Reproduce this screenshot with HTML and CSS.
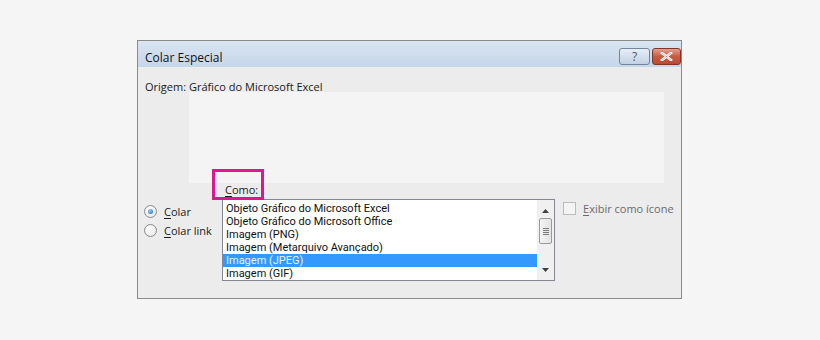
FILE: index.html
```html
<!DOCTYPE html>
<html lang="pt">
<head>
<meta charset="utf-8">
<title>Colar Especial</title>
<link rel="stylesheet" href="styles.css">
</head>
<body>
<div class="dialog">
  <div class="titlebar">
    <span class="title">Colar Especial</span>
    <div class="tbtns">
      <div class="tbtn help">?</div>
      <div class="tbtn close">
        <svg width="13" height="9" viewBox="0 0 13 9"><path d="M2 1 L11 8 M11 1 L2 8" stroke="#fff" stroke-width="2.6" stroke-linecap="square"/><path d="M2 1 L11 8 M11 1 L2 8" stroke="#5a1d12" stroke-width="0.6" fill="none" opacity="0.5"/></svg>
      </div>
    </div>
  </div>
  <div class="content">
    <div class="origin"><span class="olabel">Origem:</span><span>Gráfico do Microsoft Excel</span></div>
    <div class="preview"></div>
    <div class="como"><span class="u">C</span>omo:</div>
    <div class="mainrow">
      <div class="radios">
        <label class="radio"><span class="rb on"></span><span><span class="u">C</span>olar</span></label>
        <label class="radio"><span class="rb"></span><span><span class="u">C</span>olar link</span></label>
      </div>
      <div class="listbox">
        <ul class="items">
          <li>Objeto Gráfico do Microsoft Excel</li>
          <li>Objeto Gráfico do Microsoft Office</li>
          <li>Imagem (PNG)</li>
          <li>Imagem (Metarquivo Avançado)</li>
          <li class="sel">Imagem (JPEG)</li>
          <li>Imagem (GIF)</li>
        </ul>
        <div class="scroll">
          <svg class="arr" width="7" height="4" viewBox="0 0 7 4"><path d="M0 4 L3.5 0 L7 4Z" fill="#404040"/></svg>
          <div class="thumb"><i></i><i></i><i></i><i></i></div>
          <div class="spacer"></div>
          <svg class="arr" width="7" height="4" viewBox="0 0 7 4"><path d="M0 0 L3.5 4 L7 0Z" fill="#404040"/></svg>
        </div>
      </div>
      <label class="check"><span class="cb"></span><span><span class="u">E</span>xibir como ícone</span></label>
    </div>
  </div>
  <div class="highlight"></div>
</div>
</body>
</html>
```
FILE: styles.css
```css
html, body {
  margin: 0;
  padding: 0;
  background: #f5f5f5;
}
body {
  font-family: "Open Sans", "Noto Sans", sans-serif;
  font-size: 11px;
  color: #1a1a1a;
  padding: 40px 0 0 137px;
  height: 300px;
  box-sizing: border-box;
}
.dialog {
  position: relative;
  width: 543px;
  height: 257px;
  border: 1px solid #8a8a8a;
  background: #ececec;
  box-sizing: content-box;
}
.titlebar {
  height: 26px;
  background: linear-gradient(#d8e4f1, #c6d6e9);
  display: flex;
  align-items: flex-start;
  justify-content: space-between;
}
.title {
  font-size: 12px;
  margin: 8px 0 0 7px;
  color: #111;
}
.tbtns {
  display: flex;
  gap: 2px;
  margin-top: 7px;
}
.tbtn {
  height: 15px;
  border: 1px solid #75849a;
  border-radius: 3px;
  display: flex;
  align-items: center;
  justify-content: center;
}
.help {
  width: 29px;
  background: linear-gradient(#e6eef7, #c2d1e2);
  color: #4a5666;
  font-size: 12px;
  line-height: 15px;
}
.close {
  width: 27px;
  border-color: #803526;
  background: linear-gradient(#e2a090, #c85a44 50%, #ba4a33);
}
.content {
  padding: 12px 8px 0 7px;
}
.origin {
  display: flex;
  height: 19px;
  line-height: 15px;
}
.olabel {
  width: 44px;
}
.preview {
  margin-left: 44px;
  width: 475px;
  height: 91px;
  margin-top: -6px;
  background: #f4f4f4;
}
.como {
  margin: 0 0 0 80px;
  height: 16px;
  line-height: 14px;
}
.u {
  text-decoration: underline;
  text-underline-offset: 2px;
}
.mainrow {
  display: flex;
  align-items: flex-start;
}
.radios {
  width: 77px;
  flex: none;
  padding-top: 5px;
  display: flex;
  flex-direction: column;
  gap: 5px;
}
.radio {
  display: flex;
  align-items: center;
  gap: 7px;
  height: 14px;
  white-space: nowrap;
}
.rb {
  width: 11px;
  height: 11px;
  border-radius: 50%;
  border: 1px solid #8b8b8b;
  background: radial-gradient(circle at 40% 35%, #fff, #e2e2e2);
  box-sizing: content-box;
  position: relative;
  margin-left: -1px;
  flex: none;
}
.rb.on::after {
  content: "";
  position: absolute;
  left: 3px;
  top: 3px;
  width: 5px;
  height: 5px;
  border-radius: 50%;
  background: radial-gradient(circle at 40% 35%, #8fd1ff, #1b5fae);
}
.listbox {
  flex: none;
  width: 331px;
  height: 80px;
  border: 1px solid #838790;
  background: #fff;
  display: flex;
}
.items {
  list-style: none;
  margin: 0;
  padding: 2px 0 0 0;
  flex: 1;
  font-family: Roboto, "Open Sans", sans-serif;
  font-size: 11px;
}
.items li {
  height: 13px;
  line-height: 13px;
  padding-left: 3px;
  color: #111;
  white-space: nowrap;
}
.items li.sel {
  background: #3399ff;
  color: #e8f3ff;
}
.scroll {
  width: 17px;
  background: #f0f0f0;
  display: flex;
  flex-direction: column;
  align-items: center;
  padding: 9px 0 8px;
  box-sizing: border-box;
}
.thumb {
  margin-top: 5px;
  width: 13px;
  height: 26px;
  border: 1px solid #9a9a9a;
  border-radius: 2px;
  background: linear-gradient(90deg, #f3f3f3, #e4e4e4);
  display: flex;
  flex-direction: column;
  align-items: center;
  justify-content: center;
  gap: 1px;
  box-sizing: border-box;
}
.thumb i {
  display: block;
  width: 6px;
  height: 1px;
  background: #7a7a7a;
}
.spacer {
  flex: 1;
}
.check {
  flex: none;
  white-space: nowrap;
  margin-left: 8px;
  margin-top: 2px;
  display: flex;
  align-items: center;
  gap: 7px;
  color: #6b6b6b;
}
.cb {
  width: 11px;
  height: 11px;
  border: 1px solid #bcbcbc;
  background: #f4f4f4;
}
.highlight {
  position: absolute;
  left: 74px;
  top: 128px;
  width: 46px;
  height: 25px;
  border: 3px solid #e0168c;
}
```
